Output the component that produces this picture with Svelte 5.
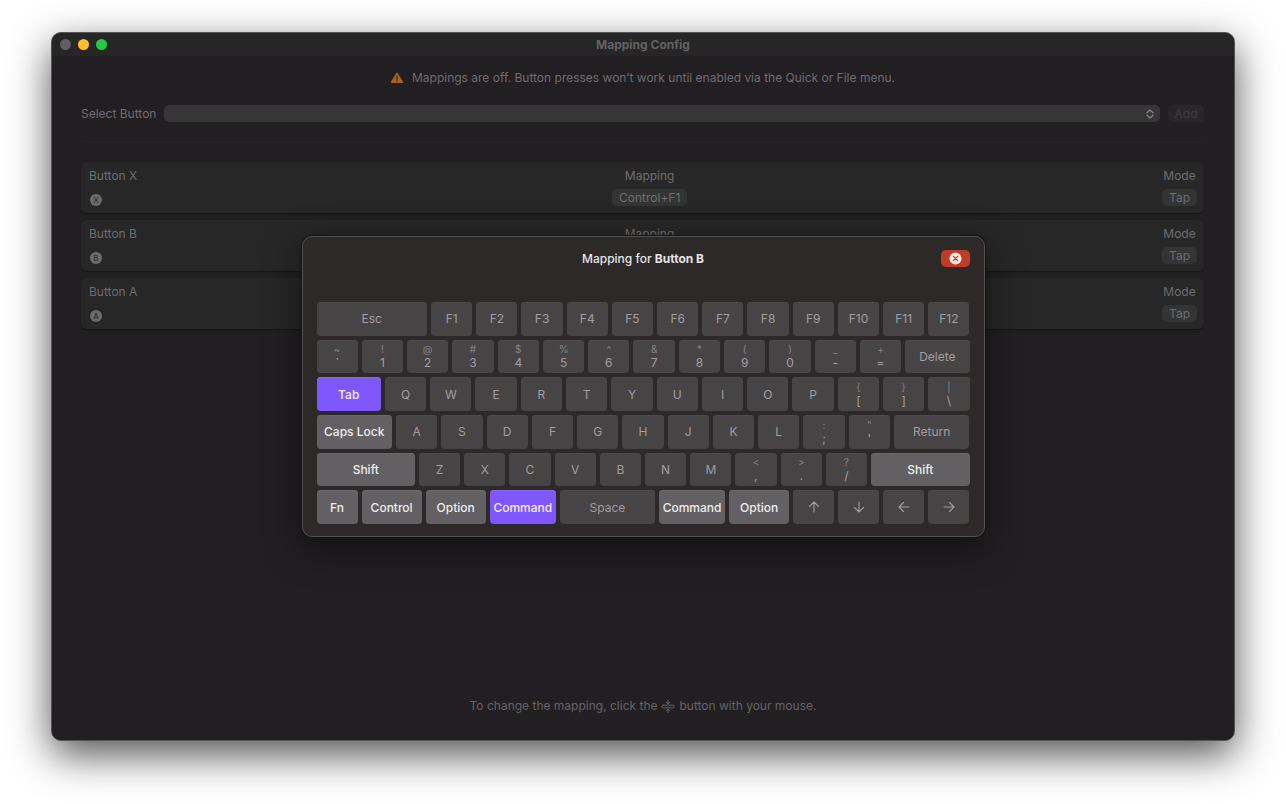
<script lang="ts">
	type Key = {
		label: string;
		alt?: string;
		size?: number;
		kind?: "modifier" | "selected";
		arrow?: string;
	};

	const mappings = [
		{ name: "Button X", letter: "X", keys: "Control+F1", mode: "Tap" },
		{ name: "Button B", letter: "B", keys: "", mode: "Tap" },
		{ name: "Button A", letter: "A", keys: "", mode: "Tap" },
	];

	const letters = (text: string): Key[] => text.split("").map((label) => ({ label }));
	const pairs = (text: string): Key[] => text.split(" ").map((pair) => ({ alt: pair[0], label: pair[1] }));

	const rows: Key[][] = [
		[{ label: "Esc", size: 110 }, ...Array.from({ length: 12 }, (_, i) => ({ label: `F${i + 1}` }))],
		[...pairs("~` !1 @2 #3 $4 %5 ^6 &7 *8 (9 )0 _- +="), { label: "Delete", size: 64 }],
		[{ label: "Tab", size: 64, kind: "selected" }, ...letters("QWERTYUIOP"), ...pairs("{[ }] |\\")],
		[
			{ label: "Caps Lock", size: 75, kind: "modifier" },
			...letters("ASDFGHJKL"),
			...pairs(":; \"'"),
			{ label: "Return", size: 75 },
		],
		[
			{ label: "Shift", size: 98, kind: "modifier" },
			...letters("ZXCVBNM"),
			...pairs("<, >. ?/"),
			{ label: "Shift", size: 98, kind: "modifier" },
		],
		[
			{ label: "Fn", kind: "modifier" },
			{ label: "Control", size: 60, kind: "modifier" },
			{ label: "Option", size: 60, kind: "modifier" },
			{ label: "Command", size: 66, kind: "selected" },
			{ label: "Space", size: 95 },
			{ label: "Command", size: 66, kind: "modifier" },
			{ label: "Option", size: 60, kind: "modifier" },
			{ label: "Up", arrow: "M6 11V1M1.5 5.5 6 1l4.5 4.5" },
			{ label: "Down", arrow: "M6 1v10M1.5 6.5 6 11l4.5-4.5" },
			{ label: "Left", arrow: "M11 6H1M5.5 1.5 1 6l4.5 4.5" },
			{ label: "Right", arrow: "M1 6h10M6.5 1.5 11 6l-4.5 4.5" },
		],
	];

	let button = $state("");
</script>

<div class="desktop">
	<div class="window">
		<header class="titlebar">
			<div class="lights">
				<button class="light" aria-label="Close window"></button>
				<button class="light minimize" aria-label="Minimize"></button>
				<button class="light zoom" aria-label="Zoom"></button>
			</div>
			<h1>Mapping Config</h1>
		</header>

		<main>
			<p class="notice">
				<svg width="14" height="12" viewBox="0 0 14 12" aria-hidden="true">
					<path d="M7 1.6 12.3 10.2H1.7Z" fill="#a4631c" stroke="#a4631c" stroke-width="1.8" stroke-linejoin="round" />
					<path d="M7 4v3.2M7 8.9v.4" stroke="#2b2320" stroke-width="1.2" />
				</svg>
				Mappings are off. Button presses won’t work until enabled via the Quick or File menu.
			</p>

			<form class="picker" onsubmit={(e) => e.preventDefault()}>
				<label for="button">Select Button</label>
				<div class="select">
					<select id="button" bind:value={button}>
						<option value=""></option>
						<option>Button Y</option>
					</select>
					<svg width="8" height="10" viewBox="0 0 8 10" aria-hidden="true">
						<path d="M1 3.7 4 .9l3 2.8M1 6.3l3 2.8 3-2.8" />
					</svg>
				</div>
				<button class="add" disabled={!button}>Add</button>
			</form>

			<hr />

			<ul>
				{#each mappings as mapping}
					<li>
						<div class="name">
							<span>{mapping.name}</span>
							<span class="badge">{mapping.letter}</span>
						</div>
						<div class="field">
							<span>Mapping</span>
							{#if mapping.keys}
								<button class="chip">{mapping.keys}</button>
							{/if}
						</div>
						<div class="field">
							<span>Mode</span>
							<button class="chip">{mapping.mode}</button>
						</div>
					</li>
				{/each}
			</ul>
		</main>

		<footer>
			To change the mapping, click the
			<svg width="14" height="13" viewBox="0 0 14 13" aria-hidden="true">
				<rect x="1" y="5.2" width="12" height="2.6" rx="1.3" />
				<path d="M7 .3v3.4M5.4 2.3 7 3.8l1.6-1.5M7 12.7V9.3M5.4 10.7 7 9.2l1.6 1.5" />
			</svg>
			button with your mouse.
		</footer>

		<div class="overlay">
			<div class="dialog" role="dialog" aria-labelledby="dialog-title">
				<div class="dialog-header">
					<h2 id="dialog-title">Mapping for <strong>Button B</strong></h2>
					<button class="close" aria-label="Close">
						<svg width="13" height="13" viewBox="0 0 13 13" aria-hidden="true">
							<circle cx="6.5" cy="6.5" r="6" fill="#fbe9e6" />
							<path d="m4.4 4.4 4.2 4.2m0-4.2L4.4 8.6" stroke="#bd3826" stroke-width="1.3" stroke-linecap="round" />
						</svg>
					</button>
				</div>

				<div class="keyboard">
					{#each rows as row}
						<div class="row">
							{#each row as key}
								<button class="key {key.kind}" style:flex-grow={key.size ?? 41} aria-label={key.arrow && key.label}>
									{#if key.arrow}
										<svg width="12" height="12" viewBox="0 0 12 12" aria-hidden="true">
											<path d={key.arrow} />
										</svg>
									{:else}
										{#if key.alt}
											<span class="alt">{key.alt}</span>
										{/if}
										<span>{key.label}</span>
									{/if}
								</button>
							{/each}
						</div>
					{/each}
				</div>
			</div>
		</div>
	</div>
</div>

<style>
	:global(body) {
		margin: 0;
		background: #fff;
	}

	.desktop {
		box-sizing: border-box;
		display: flex;
		min-height: 100vh;
		padding: 32px 51px 63px;
		overflow: hidden;
		font-family: Inter, "Liberation Sans", sans-serif;
		font-size: 12px;
		line-height: 16px;
		color: #6e6d6f;
	}

	button,
	select {
		margin: 0;
		padding: 0;
		border: none;
		font: inherit;
		color: inherit;
	}

	svg {
		fill: none;
		stroke-linecap: round;
		stroke-linejoin: round;
	}

	.window {
		position: relative;
		flex: 1;
		display: flex;
		flex-direction: column;
		min-width: 0;
		border: 1px solid #555;
		border-radius: 10px;
		background: #211f21;
		box-shadow: 0 14px 40px rgba(0, 0, 0, 0.68);
	}

	.titlebar {
		display: grid;
		grid-template-columns: 1fr auto 1fr;
		align-items: center;
		height: 23px;
		padding: 0 8px;
		border-radius: 9px 9px 0 0;
		background: #262626;
	}

	.lights {
		display: flex;
		gap: 7px;
	}

	.light {
		width: 11px;
		height: 11px;
		border-radius: 50%;
		background: #616061;
	}

	.minimize {
		background: #febc2e;
	}

	.zoom {
		background: #28c840;
	}

	h1 {
		margin: 0;
		font-size: 12px;
		font-weight: 700;
		color: #626262;
	}

	main {
		flex: 1;
		padding: 0 30px 0 29px;
	}

	.notice {
		display: flex;
		align-items: center;
		justify-content: center;
		gap: 8px;
		margin: 14px 0 0;
	}

	.picker {
		display: flex;
		align-items: center;
		gap: 8px;
		margin-top: 19px;
	}

	.select {
		position: relative;
		flex: 1;
		display: flex;
	}

	select {
		width: 100%;
		height: 17px;
		border-radius: 5px;
		background: #363636;
		appearance: none;
	}

	.select svg {
		position: absolute;
		top: 4px;
		right: 6px;
		stroke: #858585;
		stroke-width: 1.3;
		pointer-events: none;
	}

	.add {
		width: 36px;
		height: 17px;
		border-radius: 5px;
		background: #272628;
		color: #3f3e40;
	}

	hr {
		margin: 19px 0 20px;
		border: none;
		border-top: 1px solid #252326;
	}

	ul {
		display: flex;
		flex-direction: column;
		gap: 7px;
		margin: 0;
		padding: 0;
		list-style: none;
	}

	li {
		box-sizing: border-box;
		display: flex;
		justify-content: space-between;
		height: 51px;
		padding: 6px 7px 6px 8px;
		border-radius: 6px;
		background: #272728;
		box-shadow: 0 1px 1px rgba(0, 0, 0, 0.35);
	}

	.name,
	.field {
		display: flex;
		flex-direction: column;
		gap: 5px;
	}

	.name {
		gap: 10px;
	}

	.field {
		align-items: center;
	}

	.badge {
		width: 12px;
		height: 12px;
		margin-left: 1px;
		border-radius: 50%;
		background: #6c6c6d;
		font-size: 8px;
		font-weight: 500;
		line-height: 12px;
		text-align: center;
		color: #2c2c2d;
	}

	.chip {
		height: 17px;
		padding: 0 7px;
		border-radius: 5px;
		background: #343434;
	}

	footer {
		display: flex;
		align-items: center;
		justify-content: center;
		gap: 4px;
		padding-bottom: 26px;
		color: #656466;
	}

	footer svg {
		stroke: #656466;
		stroke-width: 1;
	}

	.overlay {
		position: absolute;
		inset: 0;
		display: flex;
		align-items: center;
		justify-content: center;
	}

	.dialog {
		box-sizing: border-box;
		width: 683px;
		max-width: 100%;
		padding: 13px 14px 12px;
		border: 1px solid #555253;
		border-radius: 10px;
		background: #2d2929;
		box-shadow:
			0 0 0 1px #141314,
			0 10px 36px rgba(0, 0, 0, 0.5);
	}

	.dialog-header {
		display: grid;
		grid-template-columns: 1fr auto 1fr;
		align-items: center;
		margin-bottom: 35px;
	}

	h2 {
		grid-column: 2;
		margin: 0;
		font-size: 12px;
		font-weight: 500;
		color: #e6e5e5;
	}

	strong {
		font-weight: 700;
	}

	.close {
		display: flex;
		align-items: center;
		justify-content: center;
		justify-self: end;
		width: 29px;
		height: 17px;
		border-radius: 5px;
		background: #c03c28;
	}

	.keyboard {
		display: grid;
		grid-template-rows: repeat(6, 1fr);
		gap: 4px;
		height: 222px;
	}

	.row {
		display: flex;
		gap: 4px;
	}

	.key {
		display: flex;
		flex: 1 1 0;
		flex-direction: column;
		align-items: center;
		justify-content: center;
		min-width: 0;
		border-radius: 4px;
		background: #474446;
		line-height: 13px;
		white-space: nowrap;
		color: #a09ea0;
		box-shadow: inset 0 1px #4c4a4c;
	}

	.key svg {
		stroke: #a09ea0;
		stroke-width: 1.1;
	}

	.modifier {
		background: #626063;
		color: #eeedee;
		font-weight: 500;
		box-shadow: inset 0 1px #6a686b;
	}

	.selected {
		background: #7f57ff;
		color: #f3efff;
		font-weight: 500;
		box-shadow: inset 0 1px #8a65ff;
	}

	.alt {
		font-size: 10px;
		color: #858385;
	}
</style>
